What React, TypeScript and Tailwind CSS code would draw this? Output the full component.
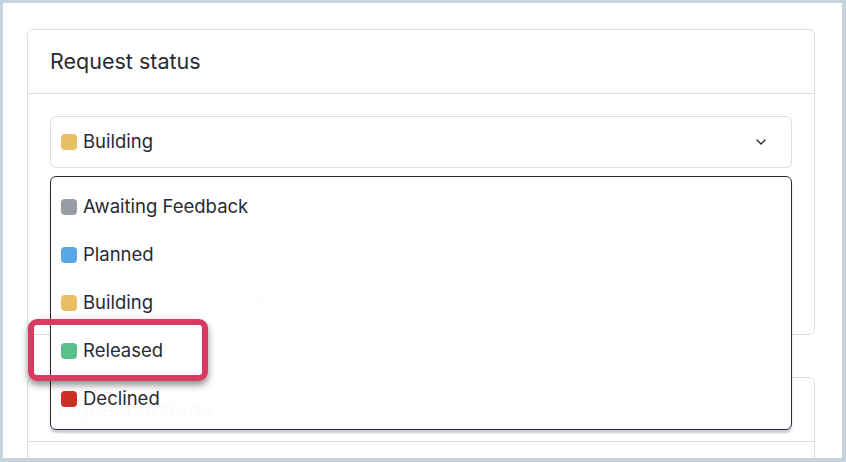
import { ChevronDown } from "lucide-react"

const statuses = [
  { label: "Awaiting Feedback", color: "bg-[#9a9ca4]" },
  { label: "Planned", color: "bg-[#58a6e6]" },
  { label: "Building", color: "bg-[#e8c063]" },
  { label: "Released", color: "bg-[#5ac08a]" },
  { label: "Declined", color: "bg-[#cc3127]" },
]

function Chip({ color }: { color: string }) {
  return <span className={`h-[16px] w-[16px] shrink-0 rounded-[4px] ${color}`} />
}

export default function App() {
  return (
    <div className="h-[462px] w-[846px] overflow-hidden bg-[#c5d3dc] pb-1 pl-[3px] pr-1 pt-[3px] font-['Inter',sans-serif] text-[#2a2a33]">
      <div className="relative h-full overflow-hidden bg-white pl-6 pr-[27px] pt-[26px]">
        {/* request status card */}
        <div className="rounded-md border border-[#dcdde3]">
          <div className="flex h-16 items-center border-b border-[#dcdde3] px-[22px] text-[21.5px]">
            Request status
          </div>
          <div className="relative px-[22px] pb-5 pt-[22px]">
            <div className="flex h-[52px] items-center gap-[6px] rounded-md border border-[#dcdde3] pl-[10px] pr-[22px]">
              <Chip color="bg-[#e8c063]" />
              <span className="flex-1 text-[18.5px]">Building</span>
              <ChevronDown className="h-4 w-4 text-[#2a2a33]" strokeWidth={2} />
            </div>
            <p className="mt-[26px] whitespace-nowrap text-[18px] italic leading-6 text-[#8b919c]">
              We're in active development of this functionality. Our team is hard at work right
              <br />
              now and may reach out to you for feedback so we can make this awesome. Please
              <br />
              upvote this request if you are interested!
            </p>
            <div className="mt-6 flex h-6 items-center gap-2 text-[18.5px] text-[#8b919c]">
              <span className="h-[22px] w-[22px] rounded-full bg-[#b4bac4]" />
              <span>
                <span className="text-[#6b93c8]">Adaeze Oduoba</span> (pendo-internal) - 6 months ago
              </span>
            </div>

            {/* open dropdown */}
            <div className="absolute left-[22px] right-[22px] top-[82px] z-10 h-[254px] rounded-md border border-[#2b2b33] bg-white/[0.98] pt-[6px] shadow-[0_3px_2px_rgba(80,95,120,0.3)]">
              {statuses.map((s) => (
                <div key={s.label} className="flex h-12 items-center gap-[6px] pl-[10px] text-[18.5px]">
                  <Chip color={s.color} />
                  <span>{s.label}</span>
                </div>
              ))}
            </div>
          </div>
        </div>

        {/* request actions card */}
        <div className="mt-[42px] rounded-md border border-[#dcdde3]">
          <div className="flex h-16 items-center border-b border-[#dcdde3] px-[22px] text-[21.5px]">
            Request actions
          </div>
          <div className="h-24" />
        </div>

        {/* highlight */}
        <div className="absolute left-[25px] top-[316px] z-20 h-[62px] w-[180px] rounded-[9px] border-[6px] border-[#d93a5f] shadow-[0_4px_7px_rgba(0,0,0,0.45)]" />
      </div>
    </div>
  )
}
